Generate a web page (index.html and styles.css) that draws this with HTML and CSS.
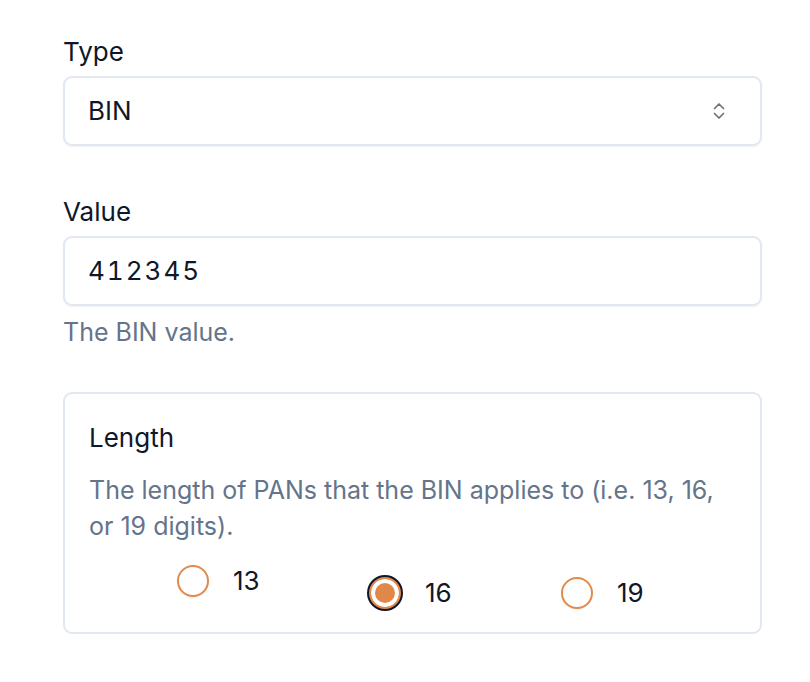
FILE: index.html
```html
<!DOCTYPE html>
<html lang="en">
<head>
<meta charset="utf-8">
<title>BIN form</title>
<link rel="stylesheet" href="styles.css">
</head>
<body>
<form class="form">
  <div class="field">
    <label class="label" for="type">Type</label>
    <div class="select">
      <span class="select-value">BIN</span>
      <svg class="chevrons" width="20" height="20" viewBox="0 0 20 20" fill="none" stroke="#6b7280" stroke-width="1.7" stroke-linecap="round" stroke-linejoin="round">
        <path d="M5.5 7.5 L10 3 L14.5 7.5"/>
        <path d="M5.5 12.5 L10 17 L14.5 12.5"/>
      </svg>
    </div>
  </div>

  <div class="field field-value">
    <label class="label" for="value">Value</label>
    <div class="input"><span class="input-value">412345</span></div>
    <p class="help">The BIN value.</p>
  </div>

  <fieldset class="card">
    <div class="card-title">Length</div>
    <p class="help card-desc">The length of PANs that the BIN applies to (i.e. 13, 16, or 19 digits).</p>
    <div class="radios">
      <label class="radio-item first"><span class="radio"></span><span class="radio-label">13</span></label>
      <label class="radio-item"><span class="radio checked"></span><span class="radio-label">16</span></label>
      <label class="radio-item"><span class="radio"></span><span class="radio-label">19</span></label>
    </div>
  </fieldset>
</form>
</body>
</html>
```

FILE: styles.css
```css
* { box-sizing: border-box; }
html, body { margin: 0; padding: 0; background: #ffffff; }
body {
  font-family: Inter, "Noto Sans", "Liberation Sans", sans-serif;
  font-size: 26px;
  line-height: 36px;
  color: #0f172a;
}
.form {
  width: 699px;
  margin-left: 63px;
  padding-top: 34px;
}
.field { display: flex; flex-direction: column; }
.field-value { margin-top: 48px; }
.label {
  display: block;
  height: 36px;
  margin-bottom: 6px;
  color: #0f172a;
}
.select, .input {
  height: 70px;
  border: 2px solid #e2e8f0;
  border-radius: 9px;
  box-shadow: 0 1px 2px rgba(15, 23, 42, 0.06);
  display: flex;
  align-items: center;
  padding: 0 31px 0 23px;
  background: #fff;
}
.select { justify-content: space-between; }
.select-value { color: #0f172a; }
.chevrons { display: block; }
.input-value {
  letter-spacing: 2px;
  font-variant-numeric: tabular-nums;
  color: #0f172a;
}
.help {
  margin: 8px 0 0;
  font-size: 25px;
  color: #64748b;
}
.card {
  margin: 42px 0 0;
  padding: 26px 24px 21px;
  border: 2px solid #e2e8f0;
  border-radius: 9px;
  min-width: 0;
}
.card-title { height: 36px; color: #0f172a; }
.card-desc { margin-top: 16px; }
.radios {
  display: grid;
  grid-template-columns: repeat(3, 192px);
  padding-left: 88px;
  margin-top: 19px;
}
.radio-item {
  display: flex;
  align-items: center;
  gap: 24px;
  height: 36px;
  margin-top: 12px;
}
.radio-item.first { margin-top: 0; }
.radio {
  width: 32px;
  height: 32px;
  border-radius: 50%;
  border: 2px solid #e3894b;
  background: #fff;
  box-shadow: 0 1px 2px rgba(0,0,0,0.06);
  flex: none;
}
.radio.checked {
  background: #e0884a;
  box-shadow: inset 0 0 0 4px #ffffff, 0 0 0 2px #0f172a;
}
.radio-label { color: #0f172a; }
```
